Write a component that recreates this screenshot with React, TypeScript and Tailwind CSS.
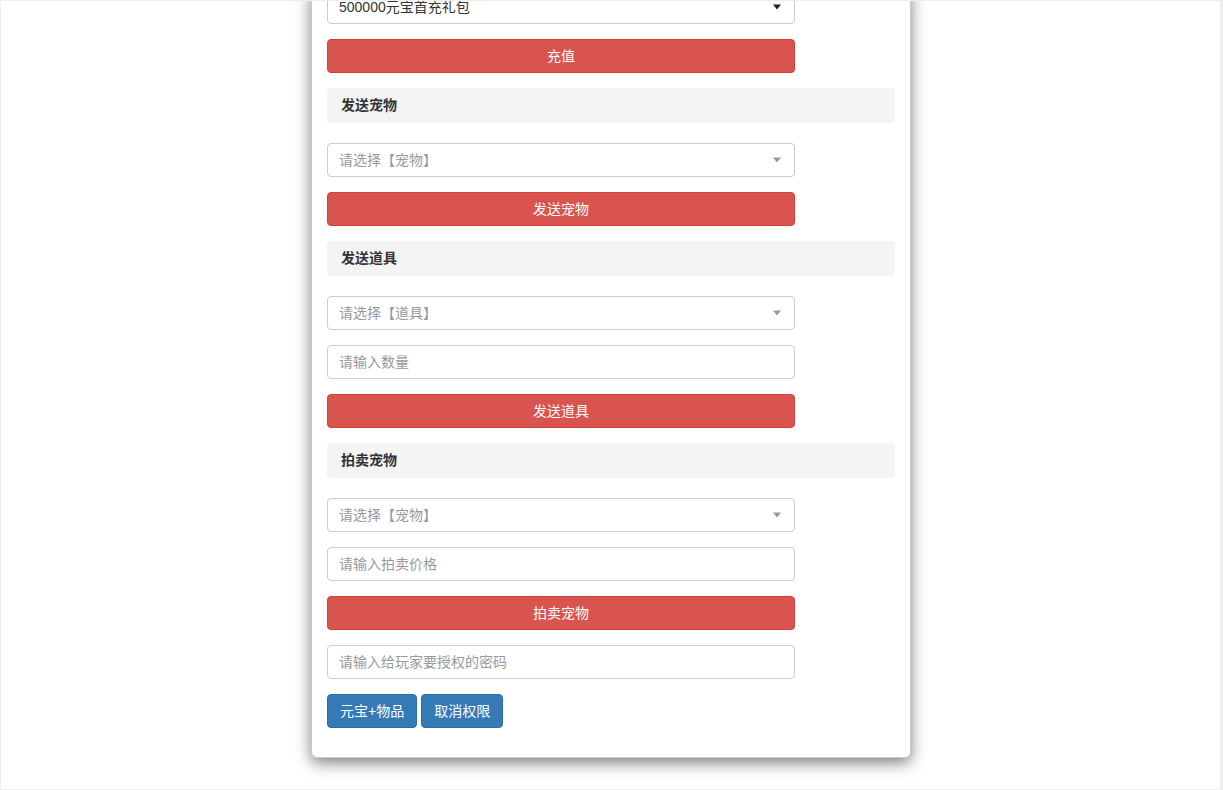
import React from 'react'

const font = { fontFamily: '"Liberation Sans", "Noto Sans CJK SC", sans-serif' }

function Caret({ dark }: { dark?: boolean }) {
  return (
    <span
      className={`absolute right-[13px] top-1/2 -translate-y-1/2 h-0 w-0 border-x-[4px] border-t-[5px] border-x-transparent ${
        dark ? 'border-t-[#222]' : 'border-t-[#999]'
      }`}
    />
  )
}

function SelectBox({ value, placeholder, dark }: { value?: string; placeholder?: string; dark?: boolean }) {
  return (
    <div className="relative h-[34px] w-[468px] rounded-[4px] border border-[#ccc] bg-white pl-[11px] pr-3 flex items-center text-[14px]">
      <span className={value ? 'text-[#333]' : 'text-[#999]'}>{value ?? placeholder}</span>
      <Caret dark={dark} />
    </div>
  )
}

function TextInput({ placeholder }: { placeholder: string }) {
  return (
    <input
      type="text"
      placeholder={placeholder}
      className="h-[34px] w-[468px] rounded-[4px] border border-[#ccc] bg-white pl-[11px] pr-3 text-[14px] text-[#555] placeholder:text-[#999] outline-none"
    />
  )
}

function RedButton({ label }: { label: string }) {
  return (
    <button className="h-[34px] w-[468px] rounded-[4px] border border-[#d43f3a] bg-[#d9534f] text-[14px] text-white">
      {label}
    </button>
  )
}

function SectionTitle({ title }: { title: string }) {
  return (
    <div className="mt-[15px] mb-[5px] h-[35px] w-[568px] rounded-[4px] bg-[#f4f4f4] px-[14px] flex items-center text-[14px] font-bold text-[#333]">
      {title}
    </div>
  )
}

export default function App() {
  return (
    <div style={font} className="h-[790px] w-[1223px] overflow-hidden border border-r-[3px] border-[#eee] bg-white">
      <div className="-mt-[12px] ml-[310px] w-[600px] rounded-b-[6px] border border-[rgba(0,0,0,0.2)] bg-white px-[15px] pb-[29px] shadow-[0_5px_15px_rgba(0,0,0,0.5)]">
        <div className="flex flex-col gap-[15px]">
          <SelectBox value="500000元宝首充礼包" dark />
          <RedButton label="充值" />
        </div>

        <SectionTitle title="发送宠物" />
        <div className="mt-[20px] flex flex-col gap-[15px]">
          <SelectBox placeholder="请选择【宠物】" />
          <RedButton label="发送宠物" />
        </div>

        <SectionTitle title="发送道具" />
        <div className="mt-[20px] flex flex-col gap-[15px]">
          <SelectBox placeholder="请选择【道具】" />
          <TextInput placeholder="请输入数量" />
          <RedButton label="发送道具" />
        </div>

        <SectionTitle title="拍卖宠物" />
        <div className="mt-[20px] flex flex-col gap-[15px]">
          <SelectBox placeholder="请选择【宠物】" />
          <TextInput placeholder="请输入拍卖价格" />
          <RedButton label="拍卖宠物" />
          <TextInput placeholder="请输入给玩家要授权的密码" />
          <div className="flex gap-[4px]">
            <button className="h-[34px] rounded-[4px] border border-[#2e6da4] bg-[#337ab7] px-[12px] text-[14px] text-white">
              元宝+物品
            </button>
            <button className="h-[34px] rounded-[4px] border border-[#2e6da4] bg-[#337ab7] px-[12px] text-[14px] text-white">
              取消权限
            </button>
          </div>
        </div>
      </div>
    </div>
  )
}
